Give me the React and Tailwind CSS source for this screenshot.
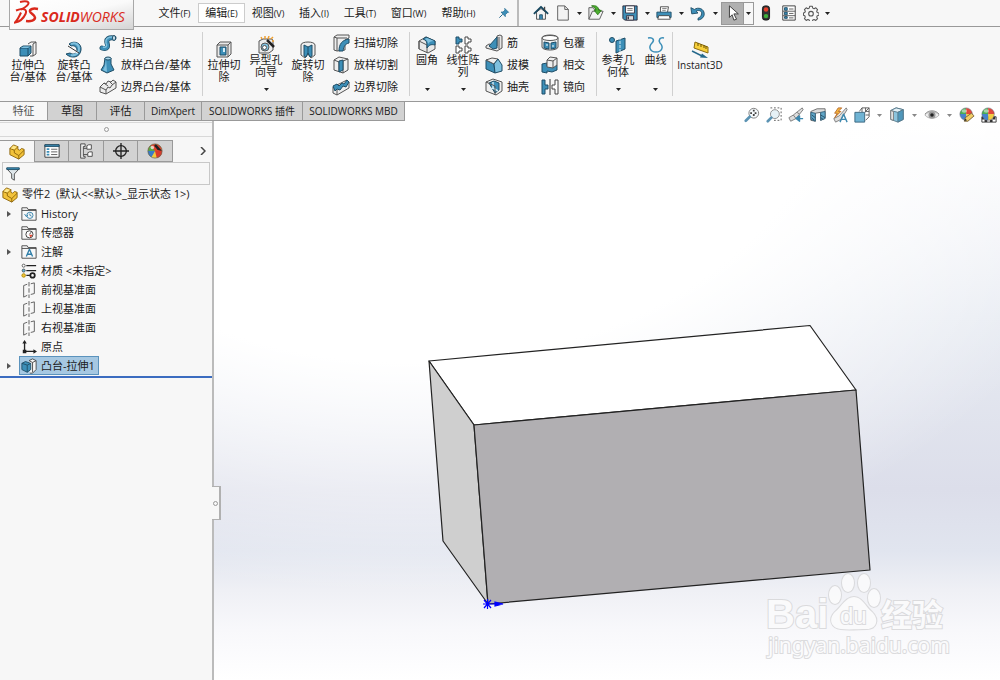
import { useState } from 'react';
import clsx from 'clsx';

const BLUE = '#3d8fb8';
const LIGHT = '#7fc0de';
const DARK = '#1f4d66';
const GREY = '#555';

/* ---------- icons ---------- */

function Svg({ size = 'w-[18px] h-[18px]', children, box = '0 0 18 18' }) {
  return (
    <svg className={clsx(size, 'shrink-0')} viewBox={box} fill="none" strokeLinejoin="round" aria-hidden="true">
      {children}
    </svg>
  );
}

const icons = {
  extrude: (
    <>
      <path d="M9 3l3-2h5v12l-3 2h-3" fill="#f4f4f4" stroke={GREY} />
      <path d="M14 3v12M14 3l3-2" stroke={GREY} />
      <path d="M1 7l3-2h8v7l-3 3H1z" fill={BLUE} stroke={DARK} />
      <path d="M1 7h8v8M9 7l3-2" stroke={DARK} />
      <path d="M1.500 7l3-1.500h7l-2.500 1.500z" fill={LIGHT} />
    </>
  ),
  revolve: (
    <>
      <path d="M4 3c5-4 13-1 12 6-1 8-10 9-15 4l4-1c3 2 7 1 7-3 0-3-3-5-6-4z" fill={BLUE} stroke={DARK} />
      <path d="M6 3c4-2 8 0 8 5 0 4-4 7-8 6" stroke={LIGHT} strokeWidth="2" />
      <path d="M4 6l9 6" stroke="#f6f6f6" strokeWidth="2" />
      <path d="M3 5l11 7" stroke="#333" />
    </>
  ),
  sweep: (
    <>
      <path d="M3 14c6 2 6-2 5-5-1-4 2-6 7-5" stroke={DARK} strokeWidth="5" strokeLinecap="round" />
      <path d="M3 14c6 2 6-2 5-5-1-4 2-6 7-5" stroke={BLUE} strokeWidth="3.500" strokeLinecap="round" />
      <path d="M4 13c4 1 4-2 3-4-1-4 2-6 6-6" stroke={LIGHT} strokeWidth="1.500" />
      <ellipse cx="15" cy="4" rx="1.500" ry="2.500" fill="#d5ebf5" stroke={DARK} />
    </>
  ),
  loft: (
    <>
      <path d="M6 2l-1 7-3 5 6 3 7-3-3-6V2z" fill={BLUE} stroke={DARK} />
      <path d="M7 3l-1 7-2 4 4 2z" fill={LIGHT} />
      <ellipse cx="9" cy="2.500" rx="3" ry="1.500" fill="#a9d7eb" stroke={DARK} />
    </>
  ),
  boundary: (
    <>
      <path d="M1 9l4-4 2 1 2-3 3 1 2-2 3 2v6l-10 6-6-2z" fill="#ececec" stroke={GREY} />
      <path d="M1 9l6 3v4M7 12l2-3 2 1 2-3 4-3M5 5l4 3M11 4l3 3" stroke={GREY} />
    </>
  ),
  cutExtrude: (
    <>
      <path d="M2 4l3-3h11v12l-3 3H2z" fill="#e9e9e9" stroke={GREY} />
      <path d="M2 4h11v12M13 4l3-3" stroke={GREY} />
      <path d="M5 6h6v8H5z" fill={BLUE} stroke={DARK} />
      <path d="M8 7h2v4H8z" fill="#d6ecf6" />
    </>
  ),
  holeWizard: (
    <>
      <path d="M2 5l4-2h9l1 2v9l-4 3H2z" fill="#ececec" stroke={GREY} />
      <circle cx="8" cy="11" r="4" fill={LIGHT} stroke={GREY} />
      <circle cx="7.500" cy="11.500" r="2" fill="#fff" stroke={GREY} />
      <path d="M10 4l7 7" stroke="#222" strokeWidth="2.500" />
      <path d="M4 1l1 2M8 0v3M12 0l-1 3M16 1l-2 2M17 5h-2" stroke="#f0a030" strokeWidth="1.500" />
    </>
  ),
  cutRevolve: (
    <>
      <path d="M2 4c0-4 14-4 14 0v10l-4 3-3-4-3 4-4-3z" fill="#eee" stroke={GREY} />
      <path d="M5 4l4 2 4-2v11l-2 1-2-4-2 4-2-1z" fill={BLUE} stroke={DARK} />
      <path d="M9 6v7" stroke={DARK} />
    </>
  ),
  cutSweep: (
    <>
      <path d="M2 3l3-2h12v3l-4 2v10l-8 1-3-1z" fill="#eee" stroke={GREY} />
      <path d="M5 17V4h10M2 3l3 1" stroke={GREY} />
      <path d="M7 17c0-7 3-11 10-12v4c-4 1-5 3-6 8z" fill={BLUE} stroke={DARK} />
    </>
  ),
  cutLoft: (
    <>
      <path d="M2 4l5-3 9 2v11l-5 3-9-3z" fill="#eee" stroke={GREY} />
      <path d="M2 4l5 2v10M11 17V5l5-2" stroke={GREY} />
      <path d="M7 5l4-1v10l-4 2z" fill={BLUE} stroke={DARK} />
    </>
  ),
  cutBoundary: (
    <>
      <path d="M1 9l14-7 2 2v6L5 17l-4-2z" fill="#eee" stroke={GREY} />
      <path d="M1 8l4-2 2 2 3-3 2 1 3-4 2 2-3 5-3-1-3 4-3-1-2 2z" fill={BLUE} stroke={DARK} />
      <path d="M5 12v5" stroke={GREY} />
    </>
  ),
  fillet: (
    <>
      <path d="M1 5l7-4 9 4v8l-7 4-9-4z" fill="#e9e9e9" stroke={GREY} />
      <path d="M1 5l8 4v8M1 5v8" stroke={GREY} />
      <path d="M5 3l3-2 9 4v4c-4-1-6 0-8 3V9c0-3-1-5-4-6z" fill={BLUE} stroke={DARK} />
      <path d="M7 3l2-1 7 3c-3 0-5 1-6 3 0-2-1-4-3-5z" fill={LIGHT} />
    </>
  ),
  pattern: (
    <>
      {[1, 10].map((y) => (
        <g key={y}>
          <path d={`M2 ${y}h3v2h3v3H5v2H2z`} fill={y === 1 ? BLUE : '#fff'} stroke={y === 1 ? DARK : '#444'} />
          <path d={`M11 ${y}h3v2h3v3h-3v2h-3z`} fill="#fff" stroke="#444" />
        </g>
      ))}
    </>
  ),
  rib: (
    <>
      <path d="M1 12l3-2 8 2V2l3-1 2 1v12l-5 3L1 14z" fill="#e6e6e6" stroke={GREY} />
      <path d="M4 12l8-9v11l-4 1z" fill={BLUE} stroke={DARK} />
      <path d="M14 3v12" stroke={GREY} />
    </>
  ),
  draft: (
    <>
      <path d="M1 4l8 4 1 9-9-4z" fill={BLUE} stroke={DARK} />
      <path d="M1 4l6-2 6 1-4 5z" fill="#f0f0f0" stroke={GREY} />
      <path d="M13 3l4 6v6l-7 2-1-9z" fill={LIGHT} stroke={DARK} />
    </>
  ),
  shell: (
    <>
      <path d="M1 4l7-3 9 3v9l-6 4-10-4z" fill="#eee" stroke={GREY} />
      <path d="M4 5l5-2 5 2v7l-4 3z" fill={BLUE} stroke={DARK} />
      <path d="M8 4v6l5 3M8 10l-3 1" stroke="#cfe8f4" strokeWidth="1.500" />
      <path d="M1 4l9 4v9" stroke={GREY} />
    </>
  ),
  wrap: (
    <>
      <path d="M1 4c0-4 16-4 16 0v9c0 4-16 4-16 0z" fill="#eee" stroke={GREY} />
      <ellipse cx="9" cy="4" rx="8" ry="2.500" fill="#fff" stroke={GREY} />
      <path d="M3 8l5 1v6l-5-1zM10 9l5-1v6l-5 1z" fill={BLUE} stroke={DARK} />
      <path d="M5 11h2M11 12h2" stroke="#fff" />
    </>
  ),
  intersect: (
    <>
      <path d="M1 8l5-1v3l5 1 5-2v5l-5 2-5-1v2l-5-1z" fill={BLUE} stroke={DARK} />
      <path d="M6 4l3-3 7 1v7l-4 3-6-1z" fill="#eee" stroke={GREY} />
      <path d="M6 4l6 1v7M12 5l4-3" stroke={GREY} />
    </>
  ),
  mirror: (
    <>
      <path d="M1 2h3v5h3v4H4v5H1z" fill={BLUE} stroke={DARK} />
      <path d="M17 2h-3v5h-3v4h3v5h3z" fill="#fff" stroke="#444" />
      <path d="M9 1v16" stroke="#333" />
    </>
  ),
  refGeometry: (
    <>
      <circle cx="3" cy="4" r="2.500" fill={BLUE} stroke={DARK} />
      <path d="M7 5l9-3v11l-9 4z" fill={BLUE} stroke={DARK} />
      <path d="M11 1v16" stroke="#d5ebf5" strokeDasharray="3 1" />
    </>
  ),
  curves: (
    <path d="M1 2c5-1 7 2 4 5-4 4-2 9 4 9s8-5 4-9c-2-3 0-6 4-5" stroke={BLUE} strokeWidth="1.500" />
  ),
  instant3d: (
    <>
      <path d="M4 1l13 5v6L3 7z" fill="#f7cf3a" stroke="#8a6c10" />
      <path d="M7 2v3M10 3v3M13 4v3M15 5v3" stroke="#6b5200" />
      <path d="M1 10l10 5" stroke="#26698c" strokeWidth="1.500" />
      <path d="M17 17l-8-.5 2-4z" fill="#26698c" />
    </>
  ),
  home: (
    <>
      <path d="M4 8v8h10V8L9 4z" fill="#f4f4f4" stroke="#444" />
      <path d="M1 10l8-8 8 8" stroke="#174860" strokeWidth="2" />
      <path d="M7.500 16v-5h3v5" fill={BLUE} stroke={DARK} />
      <path d="M13 2v4" stroke="#444" strokeWidth="1.500" />
    </>
  ),
  newDoc: (
    <>
      <path d="M3 1h8l4 4v12H3z" fill="#f3f3f3" stroke={GREY} />
      <path d="M11 1v4h4" stroke={GREY} />
    </>
  ),
  open: (
    <>
      <path d="M1 16V3h5l1 2h6v3" fill="#e8e8e8" stroke={GREY} />
      <path d="M1 16L5 7h12l-4 9z" fill="#f3f3f3" stroke={GREY} />
      <path d="M4 1c5-1 8 1 8 5h3l-4 5-4-5h2c0-2-2-4-5-5z" fill="#4caf2f" stroke="#2c7a18" />
    </>
  ),
  save: (
    <>
      <path d="M1 1h16v16H3l-2-2z" fill={BLUE} stroke="#223" />
      <path d="M4 1h10v8H4z" fill="#fff" stroke="#334" />
      <path d="M6 4h6M6 6h6" stroke="#666" />
      <path d="M5 12h8v5H5z" fill="#ddd" stroke="#334" />
      <path d="M7 13v3" stroke="#223" strokeWidth="1.500" />
    </>
  ),
  print: (
    <>
      <path d="M5 8V2h9l-1 6" fill="#fff" stroke="#444" />
      <path d="M1 8h16v6H1z" fill={BLUE} stroke={DARK} />
      <path d="M3 12h12l1 4H2z" fill="#fff" stroke="#444" />
      <path d="M7 4h5M7 6h4" stroke="#777" />
    </>
  ),
  undo: (
    <path
      d="M1 3l1 7 7-1-2-2c3-2 7 0 6 3 0 2-2 4-4 5v2c5-1 7-4 7-7 0-6-7-8-11-5z"
      fill={BLUE}
      stroke={DARK}
    />
  ),
  cursor: <path d="M5 1v13l3-3 2 6 3-1-3-6h5z" fill="#fff" stroke="#333" />,
  rebuild: (
    <>
      <rect x="5" y="1" width="8" height="16" rx="3" fill="#333" stroke="#111" />
      <circle cx="9" cy="5" r="2.500" fill="#e8402c" />
      <circle cx="9" cy="12.500" r="2.500" fill="#3fae3a" />
    </>
  ),
  fileProps: (
    <>
      <path d="M2 1h14v16H2z" fill="#fff" stroke="#333" />
      <path d="M4 3h3v3H4zM4 8h3v3H4zM4 13h3v2H4z" fill={BLUE} stroke={DARK} />
      <path d="M9 4.500h5M9 9.500h5M9 14.500h5M2 7h14M2 12h14" stroke="#555" />
    </>
  ),
  gear: (
    <>
      <path
        d="M7.500 1.500h3l.5 2 1.500.7 1.900-1 2 2-1 1.900.6 1.400 2 .5v2.500l-2 .6-.6 1.500 1 1.800-2 2-1.900-1-1.500.6-.5 2h-3l-.5-2-1.500-.6-1.900 1-2-2 1-1.800-.6-1.500-1.500-.6V9l1.500-.5.6-1.400-1-1.900 2-2 1.900 1L7 3.500z"
        stroke="#555"
        strokeWidth="1.200"
      />
      <circle cx="9" cy="9.800" r="2.600" stroke="#555" strokeWidth="1.200" />
    </>
  ),
  pin: (
    <>
      <path d="M10 2l6 6-2 .5-3 3 0 3L4.500 7.500l3 0 3-3z" fill={BLUE} stroke="#256a8f" />
      <path d="M7 11l-5 5" stroke="#256a8f" strokeWidth="1.500" />
    </>
  ),
  zoomFit: (
    <>
      <circle cx="11" cy="7" r="5.500" fill="#f5f9fb" stroke="#777" />
      <path d="M11 3v8M7 7h8" stroke="#444" strokeDasharray="2 3" strokeWidth="2" />
      <path d="M6.500 11L2 15.500" stroke="#5b93b3" strokeWidth="3" strokeLinecap="round" />
    </>
  ),
  zoomArea: (
    <>
      <path d="M5 1h12v14H9" stroke="#555" strokeDasharray="2 2" />
      <circle cx="10" cy="8" r="5" fill="#e6f1f6" stroke="#888" />
      <path d="M6 12l-4 4" stroke="#5b93b3" strokeWidth="3" strokeLinecap="round" />
    </>
  ),
  prevView: (
    <>
      <path d="M16 1L6 9l-5 3 2 4 6-3 8-10z" fill="#ddd" stroke="#777" />
      <path d="M6 9l3 4M10 6l3 2" stroke="#777" />
      <path d="M17 13h-5M9 13l4-3v6z" fill="#3b87ae" stroke="#3b87ae" strokeWidth="1.500" />
    </>
  ),
  section: (
    <>
      <path d="M1 5l7-3h9v10l-5 3V6L6 7v9l-5-1z" fill="#ddd" stroke="#666" />
      <path d="M1 6l5 1v9l-5-2zM12 6l5-1v8l-5 2z" fill="#5fa6c8" stroke="#35617a" />
      <path d="M2 9l4 3M2 12l3 3M12 9l5 3M12 12l3 2" stroke="#234e66" />
    </>
  ),
  annotView: (
    <>
      <path d="M16 1l-8 9-6 3 2 4 6-3 7-11z" fill="#ddd" stroke="#777" />
      <path d="M7 1L3 7h3l-3 5 7-7H7l4-4z" fill="#f6b73c" stroke="#b5672a" />
      <path d="M9 17l4-9 4 9M10.500 14h5" stroke="#3b87ae" strokeWidth="1.500" />
    </>
  ),
  viewOrient: (
    <>
      <path d="M6 5l3-4h8v10l-4 4" fill="#fff" stroke="#555" />
      <path d="M9 1v5M13 1v5M13 5h4M13 9h4M13 5l4-4" stroke="#555" />
      <path d="M1 6h11v11H1z" fill="#6fb3d3" stroke="#35617a" />
    </>
  ),
  displayStyle: (
    <>
      <path d="M2 4l6-3 8 2v11l-6 3-8-3z" fill="#8cc4dd" stroke="#55788a" />
      <path d="M2 4l6-3 8 2-6 3z" fill="#e4f1f7" stroke="#55788a" />
      <path d="M10 6l6-3v11l-6 3z" fill="#4f97bb" stroke="#55788a" />
      <path d="M2 4l3 1v10l-3-1z" fill="#e8e8e8" stroke="#777" />
    </>
  ),
  eye: (
    <>
      <path d="M1 9c4-5 12-5 16 0-4 5-12 5-16 0z" fill="#eee" stroke="#aaa" />
      <circle cx="9" cy="9" r="4" fill="#999" />
      <circle cx="9" cy="9" r="2" fill="#222" />
      <path d="M1 8c4-5 12-5 16 0" stroke="#888" />
    </>
  ),
  appearance: (
    <>
      <Ball />
      <path d="M6 16l1-4 7-5 3 3-7 6z" fill="#f2cf68" stroke="#75603a" />
      <path d="M6 16l1-3 2 2z" fill="#333" />
    </>
  ),
  scene: (
    <>
      <path d="M1 11h16v6H1z" fill="#fff" stroke="#333" />
      <path d="M1 11h3v3H1zM7 11h3v3H7zM13 11h3v3h-3zM4 14h3v3H4zM10 14h3v3h-3z" fill="#333" />
      <Ball />
    </>
  ),
  part: (
    <>
      <path d="M1 5l4-4 5 2v3l2 1 2-2 3 1v6l-6 5-10-5z" fill="#f2c23a" stroke="#8a6209" />
      <path d="M1 5l5 2v3l5 3 6-6M6 7l4-4M11 13v4" stroke="#8a6209" />
      <path d="M2 5l3-3 4 1-3 3z" fill="#fde68a" />
    </>
  ),
  propertyMgr: (
    <>
      <path d="M1 2h16v14H1z" fill="#fff" stroke="#333" />
      <path d="M1 2h16v2H1z" fill={BLUE} stroke={DARK} />
      <path d="M3 7h3M3 10h3M3 13h3" stroke={BLUE} strokeWidth="2" />
      <path d="M8 7h7M8 10h7M8 13h7" stroke="#555" />
    </>
  ),
  configMgr: (
    <>
      <path d="M3 1h5v3H6v11h2v2H3z" fill="#eee" stroke="#444" />
      <path d="M6 6h4M6 13h5" stroke="#444" />
      <path d="M10 3l2-1h3v5h-5zM11 11l2-1h3v5h-5z" fill="#fff" stroke="#444" />
    </>
  ),
  dimXpert: (
    <>
      <circle cx="9" cy="9" r="6" stroke="#222" strokeWidth="1.500" />
      <path d="M9 0v18M0 9h18" stroke="#222" strokeWidth="1.500" />
    </>
  ),
  displayMgr: (
    <>
      <circle cx="9" cy="9" r="8" fill="#f3c93c" />
      <path d="M9 9L1 9a8 8 0 018-8z" fill="#e0442f" />
      <path d="M9 9V1a8 8 0 018 8z" fill="#e0442f" />
      <path d="M10 1l7 8-5-1-4-5z" fill="#222" />
      <path d="M9 9L1 9a8 8 0 004 7z" fill="#3a7bc8" />
      <path d="M9 9l-8 0a8 8 0 013-6z" fill="#58a846" />
      <path d="M9 9l8 0a8 8 0 01-6 8z" fill="#d9392b" />
      <circle cx="9" cy="9" r="8" stroke="#665" strokeWidth=".8" />
      <circle cx="6" cy="5" r="2" fill="#fff" opacity=".7" />
    </>
  ),
  filter: (
    <>
      <path d="M2 3h14l-5.500 6v7l-3-2V9z" fill="#dfe7eb" stroke="#444" />
      <path d="M2 2h14v2H2z" fill={BLUE} stroke={DARK} />
    </>
  ),
  history: (
    <>
      <Folder />
      <circle cx="10" cy="10.500" r="3.500" stroke="#2f7ea8" />
      <path d="M10 8.500v2l2 1M4 9l2 3 2-2" stroke="#2f7ea8" />
    </>
  ),
  sensor: (
    <>
      <Folder />
      <circle cx="9.500" cy="10.500" r="4" fill="#fff" stroke="#333" />
      <path d="M9.500 10.500l2-2.500" stroke="#333" />
      <path d="M9 11h4l-2 3z" fill="#e0442f" />
    </>
  ),
  annotation: (
    <>
      <Folder />
      <path d="M6 14l3.500-8 3.500 8M7.500 11.500h4" stroke="#2f7ea8" strokeWidth="1.500" />
    </>
  ),
  material: (
    <>
      <circle cx="3" cy="3" r="1.700" fill="#fff" stroke="#555" />
      <circle cx="3" cy="8.500" r="1.700" fill="#5cb4dc" stroke="#555" />
      <circle cx="3" cy="14" r="2" fill="#f2c23a" stroke="#a80" />
      <path d="M6 3h11M6 8.500h11M6 14h4" stroke="#222" strokeWidth="1.500" />
      <circle cx="13" cy="14" r="2.500" stroke="#222" strokeWidth="2" />
    </>
  ),
  plane: (
    <>
      <path d="M3 4l4-1.500M11 2l4-1v12l-4 1M7 15l-4 2V4" stroke="#555" />
      <path d="M9 0v18" stroke="#555" strokeDasharray="5 2" />
    </>
  ),
  origin: (
    <>
      <path d="M4 3v11h12" stroke="#222" strokeWidth="1.500" />
      <path d="M1.500 5L4 1l2.500 4zM14 11.500l4 2.500-4 2.500zM2 12h4v4H2z" fill="#222" />
    </>
  ),
  boss: (
    <>
      <path d="M9 3l4-2 4 2v10l-4 4h-3" fill="#f6f6f6" stroke="#444" />
      <path d="M13 5v11M13 5l4-2M9 3l4 2" stroke="#444" />
      <path d="M1 6l4-2 6 2v7l-4 3-6-3z" fill={BLUE} stroke={DARK} />
      <path d="M1 6l6 2v8M7 8l4-2" stroke={DARK} />
    </>
  ),
};

function Ball() {
  return (
    <>
      <path d="M8 8V1a7 7 0 00-7 7z" fill="#4bac54" />
      <path d="M8 8V1a7 7 0 017 7z" fill="#e2483b" />
      <path d="M8 8h7a7 7 0 01-7 7z" fill="#f3cd42" />
      <path d="M8 8v7a7 7 0 01-7-7z" fill="#4583cc" />
      <circle cx="8" cy="8" r="7" stroke="#667" strokeWidth=".6" />
      <ellipse cx="6" cy="4.500" rx="3" ry="2" fill="#fff" opacity=".5" />
    </>
  );
}

function Folder() {
  return (
    <>
      <path d="M1 16V2h6l1 2h9v12z" fill="#f8f8f8" stroke="#444" />
      <path d="M1 5h16" stroke="#444" />
    </>
  );
}

function Icon({ name, size }) {
  return <Svg size={size}>{icons[name]}</Svg>;
}

function Caret({ light }) {
  return (
    <svg className="w-[5px] h-[3px] shrink-0" viewBox="0 0 5 3" aria-hidden="true">
      <path d="M0 0h5L2.500 3z" fill={light ? '#888' : '#222'} />
    </svg>
  );
}

/* ---------- title bar ---------- */

const menus = [
  { label: '文件', key: 'F', width: 'w-[47px]' },
  { label: '编辑', key: 'E', width: 'w-[47px]', active: true },
  { label: '视图', key: 'V', width: 'w-[46px]' },
  { label: '插入', key: 'I', width: 'w-[46px]' },
  { label: '工具', key: 'T', width: 'w-[46px]' },
  { label: '窗口', key: 'W', width: 'w-[51px]' },
  { label: '帮助', key: 'H', width: 'w-[49px]' },
];

function Logo() {
  return (
    <div className="absolute left-[9px] top-0 z-10 flex h-[30px] w-[125px] items-start gap-[2px] border border-t-0 border-[#a8a8a8] bg-gradient-to-br from-white via-[#fafafa] to-[#d4d4d4] pl-1 text-[#da291c]">
      <svg className="h-6 w-[25px] shrink-0" viewBox="0 0 25 24" fill="none" aria-hidden="true">
        <path d="M6 2c6-1.500 10-.5 8 2.500-1 1.500-4 3.500-7 5" stroke="currentColor" strokeWidth="2" />
        <path d="M2 10.500c8-3 11.500-1 9.500 3.500C9.500 18.500 6 21.500 1 22.500c2-2 4-5.500 6-10" stroke="currentColor" strokeWidth="2" />
        <path d="M24 9c-5-1-8.500 0-8 2.500.5 2 5 3.500 5 6 0 3-4 4-9 3.500" stroke="currentColor" strokeWidth="2.500" />
      </svg>
      <span className="mt-2 font-['Open_Sans'] text-[14px] leading-[18px] italic">
        <b>SOLID</b>WORKS
      </span>
    </div>
  );
}

function QuickButton({ name, label, width = 'w-6', caret = true }) {
  return (
    <>
      <button aria-label={label} className={clsx(width, 'flex h-full items-center justify-center')}>
        <Icon name={name} size="w-4 h-4" />
      </button>
      {caret && (
        <button aria-label={label + ' 选项'} className="flex h-full w-[10px] items-center justify-center">
          <Caret />
        </button>
      )}
    </>
  );
}

function TitleBar() {
  return (
    <header className="relative flex h-[27px] shrink-0 items-center border-b border-[#999] bg-[#f7f7f7]">
      <Logo />
      <nav className="ml-[151px] flex items-center">
        {menus.map((m) => (
          <button
            key={m.key}
            className={clsx(
              m.width,
              'h-5 border text-center leading-4 whitespace-nowrap',
              m.active ? 'border-[#ccc] bg-white' : 'border-transparent'
            )}
          >
            {m.label}
            <span className="text-[9px]">({m.key})</span>
          </button>
        ))}
      </nav>
      <button aria-label="固定" className="flex h-full w-9 items-center justify-center border-r-2 border-[#bbb] pl-2">
        <Icon name="pin" size="w-3 h-3" />
      </button>
      <div className="ml-[11px] flex h-full items-center">
        <QuickButton name="home" label="主页" width="w-[22px]" caret={false} />
        <QuickButton name="newDoc" label="新建" width="w-[22px]" />
        <QuickButton name="open" label="打开" />
        <QuickButton name="save" label="保存" />
        <QuickButton name="print" label="打印" />
        <QuickButton name="undo" label="撤消" />
        <div className="ml-px flex h-[23px] w-[33px] border border-[#999]">
          <button aria-label="选择" className="flex w-[22px] items-center justify-center border-r border-[#999] bg-[#b0b0b0]">
            <Icon name="cursor" size="w-4 h-4" />
          </button>
          <button aria-label="选择 选项" className="flex flex-1 items-center justify-center">
            <Caret />
          </button>
        </div>
        <QuickButton name="rebuild" label="重建模型" width="w-[24px]" caret={false} />
        <QuickButton name="fileProps" label="文件属性" width="w-[22px]" caret={false} />
        <QuickButton name="gear" label="选项" width="w-[22px]" />
      </div>
    </header>
  );
}

/* ---------- ribbon ---------- */

function BigButton({ icon, lines, width, menu, text = 'text-[11px]' }) {
  return (
    <button className={clsx(width, text, 'flex h-full flex-col items-center', menu ? 'pt-[9px]' : 'pt-[14px]')}>
      <Icon name={icon} size="w-[18px] h-[18px]" />
      {lines.map((line) => (
        <span key={line} className="leading-3 whitespace-nowrap">
          {line}
        </span>
      ))}
      {menu && (
        <span className="mt-auto flex pb-[10px]">
          <Caret />
        </span>
      )}
    </button>
  );
}

function SmallColumn({ items, width }) {
  return (
    <div className={clsx(width, 'flex flex-col pt-[5px]')}>
      {items.map(([icon, label]) => (
        <button key={label} className="flex h-[22px] items-center gap-1 leading-4 whitespace-nowrap">
          <Icon name={icon} size="w-[18px] h-[18px]" />
          {label}
        </button>
      ))}
    </div>
  );
}

function Divider() {
  return <div className="my-[5px] w-px self-stretch bg-[#d0d0d0]" />;
}

function Ribbon() {
  return (
    <section className="flex h-[75px] shrink-0 border-b border-[#999] bg-[#f7f7f7] pl-[5px]">
      <BigButton icon="extrude" lines={['拉伸凸', '台/基体']} width="w-[46px]" />
      <BigButton icon="revolve" lines={['旋转凸', '台/基体']} width="w-[46px]" />
      <SmallColumn
        width="w-[105px] pl-[2px]"
        items={[
          ['sweep', '扫描'],
          ['loft', '放样凸台/基体'],
          ['boundary', '边界凸台/基体'],
        ]}
      />
      <Divider />
      <BigButton icon="cutExtrude" lines={['拉伸切', '除']} width="w-[42px]" />
      <BigButton icon="holeWizard" lines={['异型孔', '向导']} width="w-[42px]" menu />
      <BigButton icon="cutRevolve" lines={['旋转切', '除']} width="w-[42px]" />
      <SmallColumn
        width="w-[80px] pl-[3px]"
        items={[
          ['cutSweep', '扫描切除'],
          ['cutLoft', '放样切割'],
          ['cutBoundary', '边界切除'],
        ]}
      />
      <Divider />
      <BigButton icon="fillet" lines={['圆角']} width="w-[34px]" menu />
      <BigButton icon="pattern" lines={['线性阵', '列']} width="w-[38px]" menu />
      <SmallColumn
        width="w-[55px] pl-[3px]"
        items={[
          ['rib', '筋'],
          ['draft', '拔模'],
          ['shell', '抽壳'],
        ]}
      />
      <SmallColumn
        width="w-[59px] pl-[4px]"
        items={[
          ['wrap', '包覆'],
          ['intersect', '相交'],
          ['mirror', '镜向'],
        ]}
      />
      <Divider />
      <BigButton icon="refGeometry" lines={['参考几', '何体']} width="w-[42px]" menu />
      <BigButton icon="curves" lines={['曲线']} width="w-[33px]" menu />
      <Divider />
      <BigButton icon="instant3d" lines={['Instant3D']} width="w-[54px]" text="text-[10px]" />
    </section>
  );
}

const ribbonTabs = [
  ['特征', 'w-12 text-[11px]'],
  ['草图', 'w-[49px] text-[11px]'],
  ['评估', 'w-12 text-[11px]'],
  ['DimXpert', 'w-[57px] text-[10px]'],
  ['SOLIDWORKS 插件', 'w-[101px] text-[10px]'],
  ['SOLIDWORKS MBD', 'w-[102px] text-[10px]'],
];

const viewTools = [
  ['zoomFit', '整屏显示全图'],
  ['zoomArea', '局部放大'],
  ['prevView', '上一视图'],
  ['section', '剖面视图'],
  ['annotView', '动态注解视图'],
  ['viewOrient', '视图定向', true],
  ['displayStyle', '显示样式', true],
  ['eye', '隐藏/显示项目', true],
  ['appearance', '编辑外观'],
  ['scene', '应用布景'],
];

function TabStrip() {
  const [tab, setTab] = useState('特征');
  return (
    <div className="flex h-[19px] shrink-0 items-start justify-between bg-white">
      <div className="flex h-full border-b border-[#999]">
        {ribbonTabs.map(([name, style]) => (
          <button
            key={name}
            onClick={() => setTab(name)}
            className={clsx(
              style,
              'border-r border-[#999] leading-4 whitespace-nowrap',
              tab === name ? 'bg-[#f7f7f7] text-[#555]' : 'bg-[#d2d2d2]'
            )}
          >
            {name}
          </button>
        ))}
      </div>
      <div className="relative z-10 mt-[3px] flex h-5 items-center">
        {viewTools.map(([icon, label, menu]) => (
          <div key={icon} className="flex">
            <button aria-label={label} className="flex h-5 w-[22px] items-center justify-center">
              <Icon name={icon} size="w-4 h-4" />
            </button>
            {menu && (
              <button aria-label={label + ' 选项'} className="flex h-5 w-[13px] items-center justify-center">
                <Caret light />
              </button>
            )}
          </div>
        ))}
      </div>
    </div>
  );
}

/* ---------- feature tree ---------- */

const panelTabs = [
  ['part', 'FeatureManager 设计树'],
  ['propertyMgr', 'PropertyManager'],
  ['configMgr', 'ConfigurationManager'],
  ['dimXpert', 'DimXpertManager'],
  ['displayMgr', 'DisplayManager'],
];

const features = [
  { icon: 'history', label: 'History', expandable: true },
  { icon: 'sensor', label: '传感器' },
  { icon: 'annotation', label: '注解', expandable: true },
  { icon: 'material', label: '材质 <未指定>' },
  { icon: 'plane', label: '前视基准面' },
  { icon: 'plane', label: '上视基准面' },
  { icon: 'plane', label: '右视基准面' },
  { icon: 'origin', label: '原点' },
  { icon: 'boss', label: '凸台-拉伸1', expandable: true },
];

function FeaturePanel() {
  const [selected, setSelected] = useState('凸台-拉伸1');
  return (
    <aside className="flex w-[214px] shrink-0 flex-col border-r-2 border-[#bbb] bg-[#f7f7f7]">
      <div className="mt-px flex h-[15px] items-center justify-center border-y border-[#d8d8d8]">
        <span className="h-[5px] w-[5px] rounded-full border border-[#999]" />
      </div>
      <div className="mt-[3px] flex h-[22px] items-stretch">
        {panelTabs.map(([icon, label], i) => (
          <button
            key={icon}
            aria-label={label}
            className={clsx(
              'flex items-center justify-center border-t border-r border-[#999]',
              i % 2 === 0 ? 'w-[35px]' : 'w-[34px]',
              i > 0 && 'border-b bg-[#d2d2d2]'
            )}
          >
            <Icon name={icon} size="w-4 h-4" />
          </button>
        ))}
        <button aria-label="更多" className="ml-auto flex w-3 items-center">
          <svg className="h-2 w-[6px]" viewBox="0 0 6 8" fill="none" aria-hidden="true">
            <path d="M1 0l4 4-4 4" stroke="#444" strokeWidth="1.500" />
          </svg>
        </button>
      </div>
      <label className="mr-[2px] ml-[2px] flex h-[23px] items-center border border-[#c8c8c8] pl-[2px]">
        <Icon name="filter" size="w-4 h-4" />
        <input aria-label="过滤" className="min-w-0 flex-1 bg-transparent px-1 outline-none" />
      </label>
      <div className="flex h-[19px] items-center gap-1 pl-[2px] whitespace-pre">
        <Icon name="part" size="w-4 h-4" />
        {'零件2  (默认<<默认>_显示状态 1>)'}
      </div>
      <ul className="border-b-2 border-[#3b6cc0] pb-px">
        {features.map((f) => (
          <li key={f.label} className="flex h-[19px] items-center">
            <span className="flex w-[19px] justify-center pr-[2px]">
              {f.expandable && (
                <svg className="h-[6px] w-1" viewBox="0 0 4 6" aria-hidden="true">
                  <path d="M0 0l4 3-4 3z" fill="#555" />
                </svg>
              )}
            </span>
            <button
              onClick={() => setSelected(f.label)}
              className={clsx(
                'flex h-[19px] items-center gap-1 border px-[1px] pr-[3px] leading-4 whitespace-nowrap',
                selected === f.label ? 'border-[#5b93bd] bg-[#a6c8e2]' : 'border-transparent'
              )}
            >
              <Icon name={f.icon} size="w-4 h-4" />
              {f.label}
            </button>
          </li>
        ))}
      </ul>
    </aside>
  );
}

/* ---------- graphics area ---------- */

function Watermark() {
  return (
    <g
      fill="#fbfbfc"
      stroke="#d8d8da"
      strokeWidth="2"
      paintOrder="stroke"
      opacity=".9"
      fontFamily="'Liberation Sans', 'Noto Sans CJK SC', sans-serif"
    >
      <text x="552" y="507" fontSize="40" fontWeight="bold">Bai</text>
      <ellipse cx="621" cy="474" rx="6" ry="9" />
      <ellipse cx="634" cy="462" rx="6" ry="9" />
      <ellipse cx="650" cy="462" rx="6" ry="9" />
      <ellipse cx="660" cy="477" rx="6" ry="9" />
      <path d="M640 476c8 0 11 9 18 15 8 8 4 17-5 17-8 0-19 1-26 0-10-1-13-10-6-17 7-6 11-15 19-15z" />
      <text x="626" y="503" fontSize="24">du</text>
      <text x="667" y="505" fontSize="31" fontWeight="bold" fontFamily="'Noto Sans CJK SC', sans-serif">经验</text>
      <text x="554" y="532" fontSize="21" fontFamily="'Noto Sans', sans-serif">jingyan.baidu.com</text>
    </g>
  );
}

function Viewport() {
  return (
    <main className="relative min-w-0 flex-1 bg-[radial-gradient(ellipse_95%_95%_at_25%_-10%,#fff_56%,transparent_100%),linear-gradient(180deg,#fff_0%,#f4f5f9_15%,#e7ebf2_35%,#dcdeea_66%,#e1e5ef_77%,#eff0f5_84%,#f8f8fb_91%,#fff_100%)]">
      <svg className="absolute inset-0 h-full w-full" viewBox="0 0 786 559" role="img" aria-label="凸台-拉伸1">
        <g stroke="#222" strokeWidth="1.200" strokeLinejoin="round">
          <path d="M215 240L596 204.500 642 269 260 304z" fill="#fff" />
          <path d="M215 240l45 64 14 179-45-63z" fill="#cfcfcf" />
          <path d="M260 304l382-35 14 180-382 34z" fill="#b1afb2" />
        </g>
        <g stroke="#00f" strokeWidth="1.200">
          <path d="M270 479l7 8M270 487l7-8M269 483h16M273.500 478v10" />
          <path d="M281 481l8 2-8 2z" fill="#00f" />
        </g>
        <Watermark />
      </svg>
      <button
        aria-label="折叠面板"
        className="absolute top-[365px] -left-[2px] flex h-[34px] w-[9px] items-center justify-center border-y border-r-2 border-[#b0b0b0] bg-[#f7f7f7]"
      >
        <span className="h-[5px] w-[5px] rounded-full border border-[#999]" />
      </button>
    </main>
  );
}

export default function App() {
  return (
    <div className="flex h-screen flex-col overflow-hidden bg-white font-['Open_Sans','Noto_Sans_CJK_SC',sans-serif] text-[11px] text-[#1a1a1a] select-none">
      <TitleBar />
      <Ribbon />
      <TabStrip />
      <div className="flex min-h-0 flex-1">
        <FeaturePanel />
        <Viewport />
      </div>
    </div>
  );
}
